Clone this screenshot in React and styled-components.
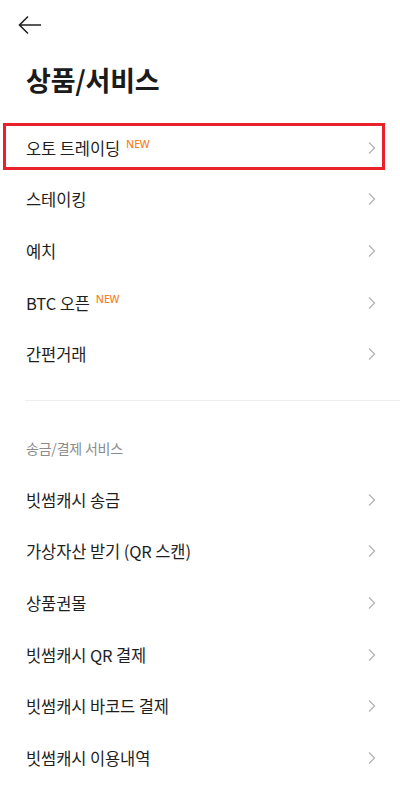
import React from "react";
import styled, { createGlobalStyle } from "styled-components";

const GlobalStyle = createGlobalStyle`
  html, body {
    margin: 0;
    padding: 0;
    background: #ffffff;
  }
  body {
    font-family: "Noto Sans CJK KR", "Noto Sans", sans-serif;
    color: #1a1a1a;
  }
`;

const Page = styled.div`
  width: 400px;
  min-height: 801px;
  background: #fff;
  overflow: hidden;
`;

const TopBar = styled.div`
  height: 50px;
  display: flex;
  align-items: center;
  padding-left: 17px;
`;

const BackButton = styled.button`
  border: none;
  background: none;
  padding: 0;
  width: 26px;
  height: 26px;
  display: flex;
  align-items: center;
  justify-content: center;
  cursor: pointer;
`;

const Title = styled.h1`
  margin: 12px 0 0;
  padding-left: 26px;
  font-size: 27px;
  line-height: 36px;
  font-weight: 700;
  color: #1b1b1b;
  letter-spacing: -0.2px;
`;

const List = styled.div`
  display: flex;
  flex-direction: column;
  margin-top: ${(p) => p.top || 0}px;
`;

const Row = styled.div`
  position: relative;
  height: 51.6px;
  display: flex;
  align-items: center;
  justify-content: space-between;
  padding: 0 23px 0 26px;

  ${(p) =>
    p.highlighted &&
    `
    &::after {
      content: "";
      position: absolute;
      left: 3px;
      right: 15px;
      top: 1px;
      bottom: 4px;
      border: 3px solid #e8212b;
      pointer-events: none;
    }
  `}
`;

const Label = styled.span`
  display: flex;
  align-items: flex-start;
  font-size: 16.5px;
  line-height: 22px;
  color: #1e1e1e;
  letter-spacing: -0.1px;
`;

const NewBadge = styled.span`
  margin-left: 6px;
  margin-top: 0;
  font-family: "Noto Sans", sans-serif;
  font-size: 10.5px;
  line-height: 14px;
  font-weight: 500;
  color: #f5822a;
`;

const Divider = styled.div`
  height: 1px;
  margin: 20px 0 0 25px;
  background: #eceef3;
`;

const SectionLabel = styled.div`
  margin-top: 37px;
  padding-left: 26px;
  font-size: 14px;
  line-height: 20px;
  color: #8b8b8b;
  letter-spacing: -0.2px;
`;

const Chevron = () => (
  <svg width="10" height="14" viewBox="0 0 10 14" fill="none">
    <path d="M2 1.5L7.5 7L2 12.5" stroke="#b4b4b4" strokeWidth="1.3" />
  </svg>
);

const BackArrow = () => (
  <svg width="24" height="20" viewBox="0 0 24 20" fill="none">
    <path d="M23 10H2M10 1.5L1.5 10L10 18.5" stroke="#222" strokeWidth="1.6" />
  </svg>
);

const products = [
  { name: "오토 트레이딩", isNew: true, highlighted: true },
  { name: "스테이킹" },
  { name: "예치" },
  { name: "BTC 오픈", isNew: true },
  { name: "간편거래" },
];

const payments = [
  { name: "빗썸캐시 송금" },
  { name: "가상자산 받기 (QR 스캔)" },
  { name: "상품권몰" },
  { name: "빗썸캐시 QR 결제" },
  { name: "빗썸캐시 바코드 결제" },
  { name: "빗썸캐시 이용내역" },
];

const MenuRow = ({ item }) => (
  <Row highlighted={item.highlighted}>
    <Label>
      {item.name}
      {item.isNew && <NewBadge>NEW</NewBadge>}
    </Label>
    <Chevron />
  </Row>
);

export default function App() {
  return (
    <>
      <GlobalStyle />
      <Page>
        <TopBar>
          <BackButton aria-label="back">
            <BackArrow />
          </BackButton>
        </TopBar>
        <Title>상품/서비스</Title>
        <List top={24}>
          {products.map((item) => (
            <MenuRow key={item.name} item={item} />
          ))}
        </List>
        <Divider />
        <SectionLabel>송금/결제 서비스</SectionLabel>
        <List top={16}>
          {payments.map((item) => (
            <MenuRow key={item.name} item={item} />
          ))}
        </List>
      </Page>
    </>
  );
}
